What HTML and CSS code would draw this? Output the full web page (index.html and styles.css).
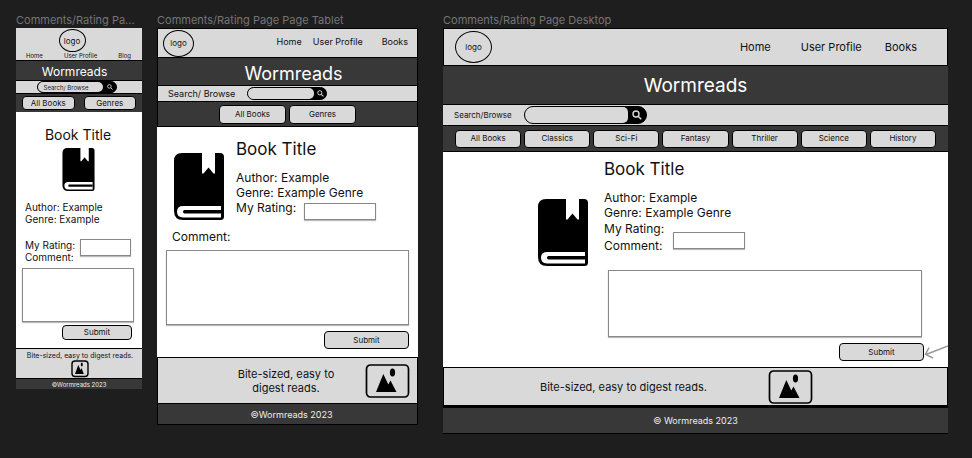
FILE: index.html
```html
<!DOCTYPE html>
<html lang="en">
<head>
<meta charset="utf-8">
<title>Wormreads – Comments/Rating Page</title>
<link rel="stylesheet" href="styles.css">
</head>
<body>
<svg class="defs" aria-hidden="true">
  <symbol id="book" viewBox="0 0 50 67">
    <path fill="#000" fill-rule="evenodd" d="M8 0H28V20.500H29.500L34.500 14.500L39.500 20.500H41V0H46Q50 0 50 4V63.500Q50 67 46.500 67H9Q0 67 0 58V8Q0 0 8 0ZM9 53Q3 53 3 58.800Q3 64.500 9 64.500H47V53Z"/>
    <path fill="#000" d="M10.500 57H47V60.500H10.500Q9 60.500 9 58.800Q9 57 10.500 57Z"/>
  </symbol>
  <symbol id="lens" viewBox="0 0 10 10">
    <circle cx="4" cy="4" r="3" fill="none" stroke="#d9d9d9" stroke-width="1.400"/>
    <path d="M6.200 6.200L9.200 9.200" stroke="#d9d9d9" stroke-width="1.600"/>
  </symbol>
  <symbol id="photo" viewBox="0 0 44 34">
    <rect x="1" y="1" width="42" height="32" rx="4" fill="none" stroke="#000" stroke-width="1.700"/>
    <path d="M10.500 28L17.800 10L22.800 20.500L25 16.500L31 28Z"/>
    <ellipse cx="27" cy="8.500" rx="2.600" ry="3.900"/>
  </symbol>
  <symbol id="photo-small" viewBox="0 0 18 18">
    <rect x="1" y="1" width="16" height="15.500" rx="3" fill="none" stroke="#000" stroke-width="1.400"/>
    <path d="M4 14L7.300 5L9.500 10L10.500 8L12.800 14Z"/>
    <ellipse cx="10.800" cy="4.500" rx="1" ry="1.900"/>
  </symbol>
</svg>
<div class="canvas">
  <section class="artboard mobile">
    <h2 class="name">Comments/Rating Pa...</h2>
    <div class="page">
      <header class="top">
        <a class="logo" href="#">logo</a>
        <nav class="links"><a href="#">Home</a><a href="#">User Profile</a><a href="#">Blog</a></nav>
      </header>
      <h1 class="brand">Wormreads</h1>
      <form class="search">
        <div class="field"><input type="search" aria-label="Search" placeholder="Search/ Browse"><button type="button" aria-label="Search"><svg><use href="#lens"/></svg></button></div>
      </form>
      <nav class="genres"><button type="button">All Books</button><button type="button">Genres</button></nav>
      <main class="review">
        <h3>Book Title</h3>
        <svg class="cover"><use href="#book"/></svg>
        <div class="info"><p>Author: Example</p><p>Genre: Example</p></div>
        <div class="rating"><label for="m-rate">My Rating:</label><label for="m-comment">Comment:</label><input id="m-rate" type="text"></div>
        <textarea id="m-comment"></textarea>
        <button class="submit" type="button">Submit</button>
      </main>
      <footer>
        <div class="tagline"><p>Bite-sized, easy to digest reads.</p><svg><use href="#photo-small"/></svg></div>
        <p class="copyright">©Wormreads 2023</p>
      </footer>
    </div>
  </section>

  <section class="artboard tablet">
    <h2 class="name">Comments/Rating Page Page Tablet</h2>
    <div class="page">
      <header class="top">
        <a class="logo" href="#">logo</a>
        <nav class="links"><a href="#">Home</a><a href="#">User Profile</a><a href="#">Books</a></nav>
      </header>
      <h1 class="brand">Wormreads</h1>
      <form class="search">
        <label for="t-search">Search/ Browse</label>
        <div class="field"><input id="t-search" type="search"><button type="button" aria-label="Search"><svg><use href="#lens"/></svg></button></div>
      </form>
      <nav class="genres"><button type="button">All Books</button><button type="button">Genres</button></nav>
      <main class="review">
        <div class="summary">
          <svg class="cover"><use href="#book"/></svg>
          <div class="details">
            <h3>Book Title</h3>
            <div class="info"><p>Author: Example</p><p>Genre: Example Genre</p></div>
            <div class="rating"><label for="t-rate">My Rating:</label><input id="t-rate" type="text"></div>
          </div>
        </div>
        <label class="comment-label" for="t-comment">Comment:</label>
        <textarea id="t-comment"></textarea>
        <button class="submit" type="button">Submit</button>
      </main>
      <footer>
        <div class="tagline"><p>Bite-sized, easy to digest reads.</p><svg><use href="#photo"/></svg></div>
        <p class="copyright">©Wormreads 2023</p>
      </footer>
    </div>
  </section>

  <section class="artboard desktop">
    <h2 class="name">Comments/Rating Page Desktop</h2>
    <div class="page">
      <header class="top">
        <a class="logo" href="#">logo</a>
        <nav class="links"><a href="#">Home</a><a href="#">User Profile</a><a href="#">Books</a></nav>
      </header>
      <h1 class="brand">Wormreads</h1>
      <form class="search">
        <label for="d-search">Search/Browse</label>
        <div class="field"><input id="d-search" type="search"><button type="button" aria-label="Search"><svg><use href="#lens"/></svg></button></div>
      </form>
      <nav class="genres"><button type="button">All Books</button><button type="button">Classics</button><button type="button">Sci-Fi</button><button type="button">Fantasy</button><button type="button">Thriller</button><button type="button">Science</button><button type="button">History</button></nav>
      <main class="review">
        <svg class="cover"><use href="#book"/></svg>
        <div class="details">
          <h3>Book Title</h3>
          <div class="info"><p>Author: Example</p><p>Genre: Example Genre</p></div>
          <div class="rating"><label for="d-rate">My Rating:</label><label for="d-comment">Comment:</label><input id="d-rate" type="text"></div>
          <textarea id="d-comment"></textarea>
          <button class="submit" type="button">Submit</button>
        </div>
        <svg class="arrow" viewBox="0 0 24 14" aria-hidden="true"><path d="M24 1L2 9.500M5 2.500L1.500 9.500L9 13" fill="none" stroke="#999" stroke-width="1.500"/></svg>
      </main>
      <footer>
        <div class="tagline"><p>Bite-sized, easy to digest reads.</p><svg><use href="#photo"/></svg></div>
        <p class="copyright">© Wormreads 2023</p>
      </footer>
    </div>
  </section>
</div>
</body>
</html>
```
FILE: styles.css
```css
* { box-sizing: border-box; }
body { margin: 0; background: #1e1e1e; color: #111; font-family: Inter, "Liberation Sans", sans-serif; }
h1, h2, h3, p { margin: 0; font-weight: 400; }
a { color: inherit; text-decoration: none; }
button, input, textarea { font: inherit; color: inherit; padding: 0; margin: 0; }
svg { display: block; }
.defs { position: absolute; width: 0; height: 0; }

.canvas {
  display: grid;
  grid-template-columns: 126fr 261fr 515fr;
  column-gap: 15px;
  align-items: start;
  padding: 12px 24px 24px 16px;
}
.artboard { min-width: 0; }
.desktop { margin-left: 10px; }
.name {
  height: 16px;
  color: #757575;
  font-size: 11px;
  line-height: 16px;
  white-space: nowrap;
}
.page { background: #fff; }

/* Header bars */
.top { display: flex; align-items: center; justify-content: space-between; background: #d9d9d9; border: 1px solid #000; }
.logo { display: flex; align-items: center; justify-content: center; border: 1px solid #000; border-radius: 50%; font-size: 8px; }
.links { display: flex; }
.brand { display: flex; align-items: center; justify-content: center; background: #383838; color: #fff; }
.search { display: flex; align-items: center; background: #d9d9d9; border: 1px solid #000; }
.field { display: flex; overflow: hidden; background: #000; border: 1px solid #000; border-radius: 10px; }
.field input { flex: 1; min-width: 0; background: #d9d9d9; border: 0; border-radius: 0 5px 5px 0; outline: 0; appearance: none; text-align: center; }
.field input::placeholder { color: #222; opacity: 1; }
.field button { display: flex; align-items: center; justify-content: center; background: #000; border: 0; }
.genres { display: flex; align-items: center; justify-content: center; background: #383838; font-size: 8px; }
.genres button, .submit { padding-bottom: 1px; background: #d9d9d9; border: 1px solid #000; border-radius: 4px; font-size: 8px; }

/* Review form */
.review textarea, .rating input { display: block; background: #fff; border: 1px solid #888; border-radius: 0; outline: 0; box-shadow: 0 1px 1px #bbb; resize: none; }
.submit { display: block; margin-left: auto; }
.cover { flex: none; width: 50px; height: 67px; }

/* Footer */
.tagline { display: flex; align-items: center; background: #d9d9d9; border: 1px solid #000; }
.tagline svg { flex: none; width: 45px; height: 34px; }
.copyright { display: flex; align-items: center; justify-content: center; background: #383838; color: #eee; }

/* Mobile */
.mobile .top { flex-direction: column; height: 33px; border-width: 0 0 1px; }
.mobile .logo { width: 27px; height: 24px; margin: 1px 14px 0 0; }
.mobile .links { width: 100%; padding: 0 11px 1px 10px; justify-content: space-between; font-size: 6px; line-height: 7px; }
.mobile .brand { height: 19px; padding: 2px 9px 0 0; font-size: 12px; }
.mobile .search { height: 14px; padding-left: 21px; border-width: 1px 0; }
.mobile .field { width: 80px; height: 12px; font-size: 6px; }
.mobile .field button { width: 13px; }
.mobile .field svg { width: 6px; height: 6px; }
.mobile .genres { height: 18px; padding: 0 6px; gap: 9px; }
.mobile .genres button { flex: 1; height: 14px; }
.mobile .review { padding: 14px 8px 8px 6px; }
.mobile h3 { font-size: 14px; line-height: 18px; text-align: center; }
.mobile .cover { width: 33px; height: 43px; margin: 4px auto 10px; }
.mobile .info { padding-left: 3px; font-size: 10px; line-height: 12px; }
.mobile .rating { display: grid; grid-template-columns: auto 1fr; column-gap: 5px; margin-top: 14px; padding: 0 3px; font-size: 10px; line-height: 12px; }
.mobile .rating input { grid-area: 1 / 2 / 3 / 3; width: 100%; height: 17px; }
.mobile textarea { width: 100%; height: 54px; margin-top: 5px; }
.mobile .submit { width: 70px; height: 15px; margin-top: 3px; margin-right: 2px; }
.mobile .tagline { flex-direction: column; padding: 2px 0 0 2px; border-width: 1px 0; font-size: 7px; line-height: 9px; }
.mobile .tagline svg { width: 18px; height: 18px; }
.mobile .copyright { height: 10px; font-size: 6px; }

/* Tablet */
.tablet .top { height: 30px; padding: 0 9px 4px 5px; }
.tablet .logo { width: 31px; height: 27px; margin-top: 4px; }
.tablet .links { gap: 11px; font-size: 9px; }
.tablet .links a:last-child { margin-left: 8px; }
.tablet .brand { height: 27px; padding: 4px 0 0 12px; border: solid #000; border-width: 0 1px; font-size: 18px; }
.tablet .search { height: 17px; padding-left: 10px; gap: 12px; font-size: 9px; }
.tablet .field { width: 80px; height: 13px; }
.tablet .field button { width: 12px; }
.tablet .field svg { width: 7px; height: 7px; }
.tablet .genres { height: 25px; gap: 3px; border: solid #000; border-width: 0 1px 1px; }
.tablet .genres button { width: 67px; height: 19px; }
.tablet .review { padding: 12px 9px 8px 9px; }
.tablet .summary { display: flex; align-items: end; gap: 12px; padding-left: 8px; }
.tablet h3, .desktop h3 { font-size: 17px; line-height: 20px; }
.tablet .info, .desktop .info { margin-top: 11px; font-size: 12px; line-height: 15px; }
.tablet .rating { display: flex; align-items: start; gap: 8px; font-size: 12px; line-height: 15px; }
.tablet .rating input { width: 72px; height: 17px; margin-top: 3px; }
.tablet .comment-label { display: block; margin: 9px 0 6px 6px; font-size: 12px; line-height: 15px; }
.tablet textarea { width: 100%; height: 75px; }
.tablet .submit { width: 85px; height: 18px; margin-top: 6px; }
.tablet .tagline { height: 47px; padding: 0 7px; gap: 24px; font-size: 11px; line-height: 14px; text-align: center; }
.tablet .tagline p { width: 110px; margin-left: auto; }
.tablet .copyright { height: 21px; padding-left: 8px; border: solid #000; border-width: 0 1px 1px; font-size: 9px; }

/* Desktop */
.desktop .top { height: 38px; padding: 0 30px 0 11px; }
.desktop .logo { width: 37px; height: 32px; }
.desktop .links { gap: 23px; font-size: 11px; }
.desktop .links a:first-child { margin-right: 7px; }
.desktop .brand { height: 38px; font-size: 19px; }
.desktop .search { height: 22px; padding-left: 11px; gap: 12px; border-width: 1px 0; font-size: 8px; }
.desktop .field { width: 123px; height: 18px; }
.desktop .field button { width: 18px; }
.desktop .field svg { width: 10px; height: 10px; }
.desktop .genres { height: 26px; padding: 0 12px; gap: 3px; border-bottom: 1px solid #000; }
.desktop .genres button { flex: 1; height: 18px; }
.desktop .review { position: relative; display: flex; gap: 16px; padding: 7px 24px 6px 95px; }
.desktop .cover { margin-top: 40px; }
.desktop .details { flex: 1; }
.desktop .rating { display: grid; grid-template-columns: auto 1fr; column-gap: 9px; font-size: 12px; line-height: 17px; }
.desktop .rating input { grid-area: 1 / 2 / 3 / 3; align-self: center; width: 72px; height: 17px; margin-top: 6px; }
.desktop textarea { width: calc(100% - 6px); height: 67px; margin: 16px 0 0 4px; }
.desktop .submit { width: 85px; height: 18px; margin-top: 6px; }
.desktop .arrow { position: absolute; right: 0; bottom: 8px; width: 24px; height: 14px; }
.desktop .tagline { height: 39px; padding-left: 96px; gap: 61px; font-size: 11px; }
.desktop .copyright { height: 28px; border: solid #000; border-width: 2px 0 1px; font-size: 9px; }
```
